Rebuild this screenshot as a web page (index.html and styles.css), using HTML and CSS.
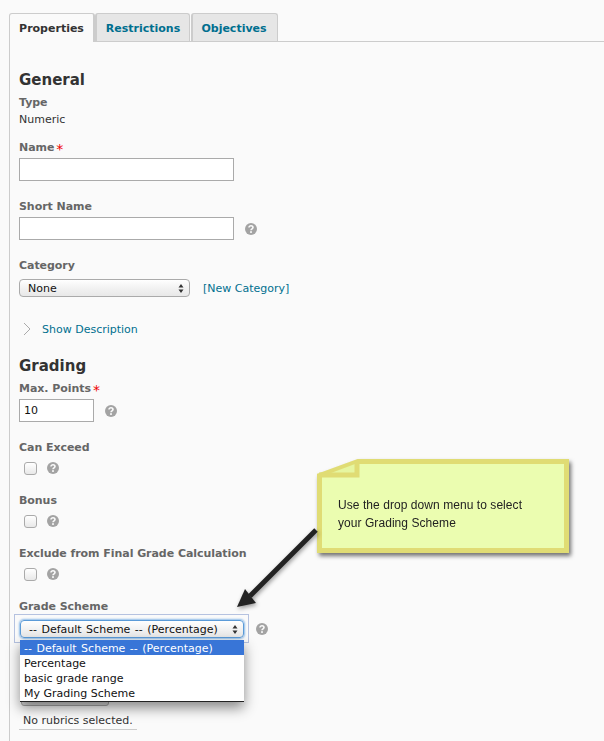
FILE: index.html
```html
<!DOCTYPE html>
<html lang="en">
<head>
    <meta charset="UTF-8">
    <title>Edit Grade Item</title>
    <link rel="stylesheet" href="styles.css">
</head>
<body>
    <div class="tabs">
        <div class="tab active">Properties</div>
        <div class="tab">Restrictions</div>
        <div class="tab">Objectives</div>
    </div>

    <div class="panel">
        <h2 class="heading">General</h2>
        <div class="label">Type</div>
        <div class="value">Numeric</div>

        <div class="label name-label">Name<span class="req">*</span></div>
        <div class="row"><input class="text-input" type="text"></div>

        <div class="label field-label">Short Name</div>
        <div class="row">
            <input class="text-input" type="text">
            <svg class="help help-wide" viewBox="0 0 12 12"><use href="#help-icon"></use></svg>
        </div>

        <div class="label field-label">Category</div>
        <div class="row category-row">
            <div class="select category-select">None<svg class="updown" viewBox="0 0 6 9"><path d="M3 0L5.5 3.4H.5zM3 9L.5 5.6h5z"/></svg></div>
            <a class="link new-category">[New Category]</a>
        </div>

        <div class="show-desc">
            <svg class="chevron" viewBox="0 0 8 14"><path d="M1 1l6 6-6 6"/></svg>
            <a class="link">Show Description</a>
        </div>

        <h2 class="heading grading">Grading</h2>
        <div class="label points-label">Max. Points<span class="req">*</span></div>
        <div class="row">
            <input class="text-input points" type="text" value="10">
            <svg class="help help-wide" viewBox="0 0 12 12"><use href="#help-icon"></use></svg>
        </div>

        <div class="label field-label">Can Exceed</div>
        <div class="check-row"><span class="check"></span><svg class="help" viewBox="0 0 12 12"><use href="#help-icon"></use></svg></div>

        <div class="label check-label">Bonus</div>
        <div class="check-row"><span class="check"></span><svg class="help" viewBox="0 0 12 12"><use href="#help-icon"></use></svg></div>

        <div class="label check-label">Exclude from Final Grade Calculation</div>
        <div class="check-row"><span class="check"></span><svg class="help" viewBox="0 0 12 12"><use href="#help-icon"></use></svg></div>

        <div class="label check-label">Grade Scheme</div>
        <div class="scheme-row">
            <div class="focus-box">
                <div class="select scheme-select"><span class="dashed">-- Default Scheme -- (Percentage)</span><svg class="updown" viewBox="0 0 6 9"><path d="M3 0L5.5 3.4H.5zM3 9L.5 5.6h5z"/></svg></div>
            </div>
            <svg class="help" viewBox="0 0 12 12"><use href="#help-icon"></use></svg>
            <div class="menu">
                <div class="menu-item selected"><span class="dashed">-- Default Scheme -- (Percentage)</span></div>
                <div class="menu-item">Percentage</div>
                <div class="menu-item">basic grade range</div>
                <div class="menu-item">My Grading Scheme</div>
            </div>
        </div>

        <div class="hidden-button"></div>
        <div class="no-rubrics">No rubrics selected.</div>
    </div>

    <!-- callout on top of the page -->
    <div class="note">
        <svg class="note-bg" viewBox="0 0 252 94">
            <path d="M2.5 16.5L41 2.5H249.5V91.5H2.5z" fill="#ebfdb0" stroke="#e0dc74" stroke-width="5"/>
            <path d="M14 14L38 5V14z" fill="#e6f6a0"/>
            <path d="M2 16H40V2" fill="none" stroke="#e0dc74" stroke-width="5"/>
        </svg>
        <p class="note-text">Use the drop down menu to select<br>your Grading Scheme</p>
    </div>
    <svg class="arrow" viewBox="0 0 90 90">
        <path d="M84 4L18 70" stroke="#222" stroke-width="5" fill="none"/>
        <path d="M5 81L24 77L13 63z" fill="#222"/>
    </svg>

    <svg class="defs" width="0" height="0">
        <symbol id="help-icon" viewBox="0 0 12 12">
            <circle cx="6" cy="6" r="6" fill="#a3a3a3"/>
            <path d="M4 4.6C4 3.4 4.9 2.8 6 2.8S8 3.5 8 4.5C8 5.8 6 5.8 6 7.2" fill="none" stroke="#fafafa" stroke-width="1.6"/>
            <rect x="5.1" y="8.2" width="1.8" height="1.7" fill="#fafafa"/>
        </symbol>
    </svg>
</body>
</html>
```

FILE: styles.css
```css
html, body {
    height: 741px;
    overflow: hidden;
}
body {
    position: relative;
    margin: 0;
    padding: 13px 0 0 9px;
    box-sizing: border-box;
    background-color: #fafafa;
    font-family: "DejaVu Sans", Verdana, sans-serif;
    font-size: 11px;
    color: #333;
}
.tabs {
    display: flex;
    height: 29px;
    box-sizing: border-box;
    border-bottom: 1px solid #ccc;
}
.tab {
    width: 87px;
    height: 28px;
    margin-right: 1px;
    box-sizing: border-box;
    padding: 8px 2px 0 0;
    text-align: center;
    font-weight: bold;
    color: #006f8f;
    background-color: #e6e6e6;
    border: 1px solid #ccc;
    border-bottom: none;
    border-left: 2px solid #ccc;
    border-radius: 3px 3px 0 0;
}
.tab:nth-child(2) {
    width: 95px;
    padding-right: 0;
}
.tab.active {
    width: 86px;
    height: 29px;
    margin-right: 0;
    padding-right: 0;
    color: #333;
    background-color: #fafafa;
    border-left: 1px solid #ccc;
    border-right: 2px solid #ccc;
}
.panel {
    height: 700px;
    padding: 28px 0 0 9px;
    border-left: 1px solid #ccc;
}
.heading {
    margin: 0;
    font-size: 15px;
    line-height: 20px;
    color: #333;
}
.grading {
    margin-top: 20px;
}
.label {
    font-weight: bold;
    line-height: 14px;
    letter-spacing: -0.05px;
    color: #666;
    margin-top: 6px;
}
.name-label {
    margin-top: 14px;
}
.field-label {
    margin-top: 19px;
}
.points-label {
    margin-top: 6px;
}
.check-label {
    margin-top: 19px;
}
.value {
    line-height: 14px;
    margin-top: 3px;
    color: #333;
}
.req {
    margin-left: 2px;
    font-size: 14px;
    line-height: 0;
    vertical-align: -3px;
    font-weight: normal;
    color: #e00;
}
.row {
    display: flex;
    align-items: center;
    margin-top: 3px;
}
.text-input {
    width: 215px;
    height: 23px;
    box-sizing: border-box;
    padding: 0 4px;
    border: 1px solid #aaa;
    background-color: #fff;
    font: 11px "DejaVu Sans", sans-serif;
    color: #111;
}
.points {
    width: 75px;
}
.help {
    width: 12px;
    height: 12px;
    flex: none;
}
.help-wide {
    margin-left: 11px;
}
.select {
    display: flex;
    align-items: center;
    justify-content: space-between;
    box-sizing: border-box;
    height: 18px;
    padding: 0 5px 0 8px;
    border: 1px solid #aaa;
    border-radius: 4px;
    background: linear-gradient(#fff, #f2f2f2 50%, #e8e8e8);
    font-size: 11px;
    color: #111;
}
.category-select {
    width: 171px;
}
.category-row {
    margin-top: 6px;
}
.updown {
    width: 6px;
    height: 9px;
    fill: #333;
}
.link {
    color: #006f8f;
}
.new-category {
    margin-left: 13px;
}
.show-desc {
    display: flex;
    align-items: center;
    margin-top: 25px;
    height: 14px;
}
.chevron {
    width: 8px;
    height: 14px;
    margin: 0 11px 0 4px;
    fill: none;
    stroke: #aaa;
}
.check-row {
    display: flex;
    align-items: center;
    height: 14px;
    margin-top: 6px;
    padding-left: 5px;
}
.check {
    width: 11px;
    height: 11px;
    margin-right: 10px;
    border: 1px solid #aaa;
    border-radius: 3px;
    background: linear-gradient(#fff, #e8e8e8);
}
.scheme-row {
    position: relative;
    display: flex;
    align-items: center;
    margin: 0 0 0 -5px;
}
.focus-box {
    width: 235px;
    height: 29px;
    box-sizing: border-box;
    padding: 5px 0 0 5px;
    border: 1px solid #b5c2e0;
}
.scheme-select {
    width: 224px;
    padding-left: 8px;
    border: 1px solid #5b9bd8;
    box-shadow: 0 0 2px 1px #8ebbe8;
}
.dashed {
    word-spacing: 1px;
}
.scheme-row .help {
    margin-left: 7px;
}
.menu {
    position: absolute;
    left: 6px;
    top: 26px;
    width: 224px;
    height: 61px;
    background-color: #fff;
    color: #111;
    border-bottom: 1px solid #222;
    box-shadow: 0 6px 12px rgba(0, 0, 0, 0.45);
}
.menu-item {
    height: 15px;
    line-height: 17px;
    padding-left: 4px;
}
.menu-item.selected {
    background-color: #3875d7;
    color: #fff;
}
.hidden-button {
    width: 88px;
    height: 20px;
    margin: 43px 0 0 2px;
    box-sizing: border-box;
    background-color: #ddd;
    border: 1px solid #aaa;
    border-radius: 3px;
}
.no-rubrics {
    width: 114px;
    margin-top: 8px;
    padding: 0 0 1px 4px;
    line-height: 14px;
    border-bottom: 1px solid #ccc;
}
.note {
    position: absolute;
    left: 317px;
    top: 459px;
    width: 252px;
    height: 94px;
    filter: drop-shadow(2px 3px 2px rgba(0, 0, 0, 0.55));
}
.note-bg {
    position: absolute;
    left: 0;
    top: 0;
    width: 252px;
    height: 94px;
}
.note-text {
    position: relative;
    margin: 0;
    padding: 37px 0 0 21px;
    font: 12px/18px "Liberation Sans", Arial, sans-serif;
    letter-spacing: 0.06px;
    color: #222;
}
.arrow {
    position: absolute;
    left: 232px;
    top: 526px;
    width: 90px;
    height: 90px;
    filter: drop-shadow(1px 2px 2px rgba(0, 0, 0, 0.4));
}
.defs {
    position: absolute;
}
```
